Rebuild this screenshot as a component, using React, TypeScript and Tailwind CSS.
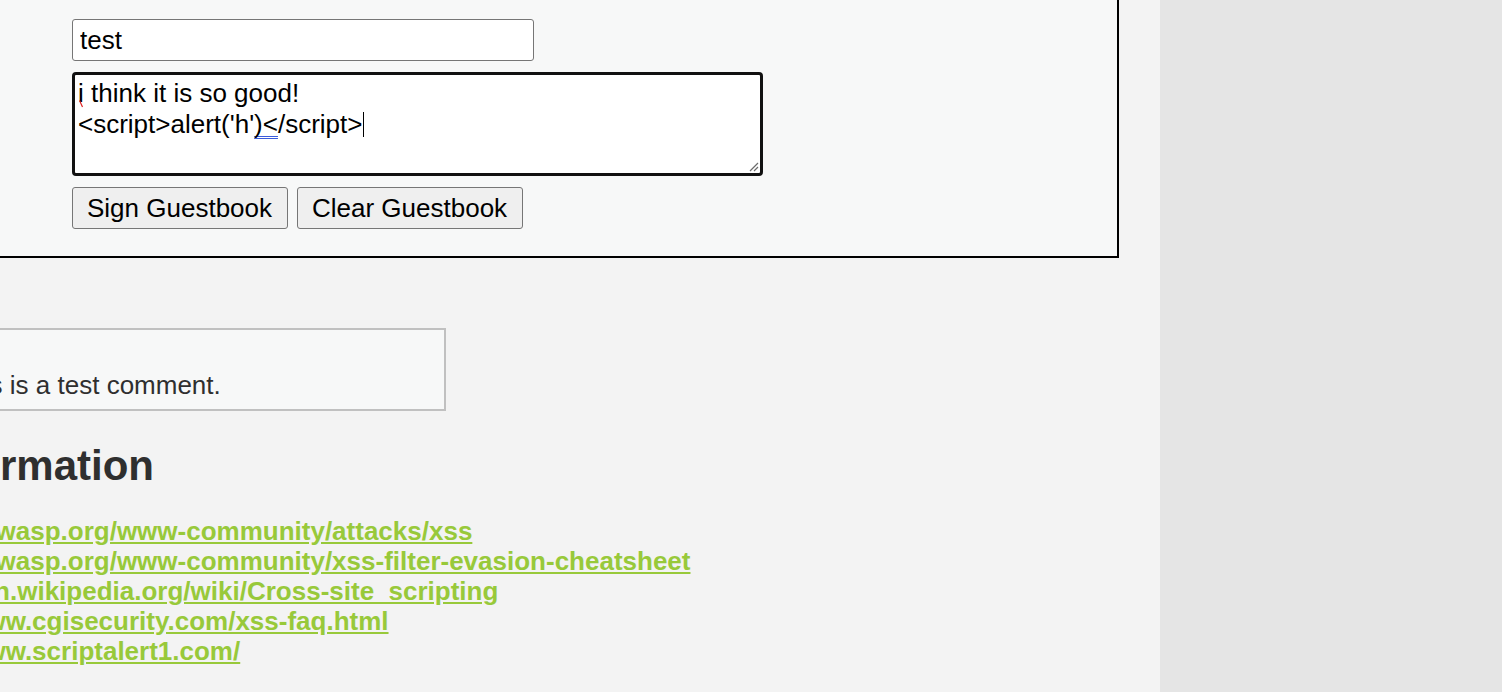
import React from 'react';

const links = [
  'https://owasp.org/www-community/attacks/xss',
  'https://owasp.org/www-community/xss-filter-evasion-cheatsheet',
  'https://en.wikipedia.org/wiki/Cross-site_scripting',
  'http://www.cgisecurity.com/xss-faq.html',
  'http://www.scriptalert1.com/',
];

function ResizeGrip() {
  return (
    <svg className="absolute right-[1px] bottom-[1px]" width="11" height="11" viewBox="0 0 11 11">
      <path d="M10 2 L2 10 M10 6 L6 10" stroke="#6b6b6b" strokeWidth="1.2" fill="none" />
    </svg>
  );
}

export default function App() {
  return (
    <div className="flex min-h-screen font-['Liberation_Sans',Arial,sans-serif]">
      <div className="w-[1160px] shrink-0 overflow-hidden bg-[#f3f3f3]">
        <div className="-ml-[189px] -mt-[40px] w-[1349px]">
          {/* Vulnerable code area */}
          <div className="w-[1308px] border-2 border-black bg-[#f7f8f8] pt-[57px] pb-[27px] pl-[259px]">
            <form className="flex flex-col gap-[11px]" onSubmit={(e) => e.preventDefault()}>
              <input
                defaultValue="test"
                className="h-[42px] w-[462px] rounded-[3px] border border-[#767676] bg-white px-[7px] text-[26px] leading-[30px] text-black outline-none"
              />
              <div className="relative h-[104px] w-[691px] rounded-[4px] border-[3px] border-[#111111] bg-white pt-[3px] pl-[3px] text-[26px] leading-[31px] text-black">
                <div>
                  <span className="relative">
                    i
                    <svg className="absolute left-[1px] top-[22px]" width="5" height="8" viewBox="0 0 5 8">
                      <path d="M0.5 0.5 L3.5 7" stroke="#e02020" strokeWidth="1.2" fill="none" />
                    </svg>
                  </span>{' '}
                  think it is so good!
                </div>
                <div className="flex items-center">
                  <span>&lt;script&gt;alert('h'</span>
                  <span className="underline decoration-double decoration-[#3b5bdb] decoration-[1px] underline-offset-[3px] [text-decoration-skip-ink:none]">)&lt;</span>
                  <span>/script&gt;</span>
                  <span className="ml-[1px] inline-block h-[25px] w-px bg-black" />
                </div>
                <ResizeGrip />
              </div>
              <div className="flex gap-[9px]">
                <button className="h-[42px] rounded-[3px] border border-[#767676] bg-[#efefef] pl-[14px] pr-[15px] text-[26px] text-black">
                  Sign Guestbook
                </button>
                <button className="h-[42px] rounded-[3px] border border-[#767676] bg-[#efefef] pl-[14px] pr-[15px] text-[26px] text-black">
                  Clear Guestbook
                </button>
              </div>
            </form>
          </div>

          {/* Guestbook comments */}
          <div className="mt-[70px] ml-[11px] w-[624px] border-2 border-[#c0c0c0] bg-[#f7f8f8] pt-[10px] pb-[9px] pl-[10px] text-[26px] leading-[30px] text-[#2f2f2f]">
            <div>Name: test</div>
            <div>Message: This is a test comment.</div>
          </div>

          {/* More info */}
          <h2 className="mt-[31px] text-[42px] font-bold leading-[48px] text-[#2f2f2f]">More Information</h2>
          <ul className="mt-[26px] pl-[82px]">
            {links.map((href) => (
              <li key={href} className="text-[26px] leading-[30px]">
                <a href={href} className="font-bold text-[#98c93a] underline">
                  {href}
                </a>
              </li>
            ))}
          </ul>
        </div>
      </div>
      <div className="flex-1 bg-[#e5e5e5]" />
    </div>
  );
}
